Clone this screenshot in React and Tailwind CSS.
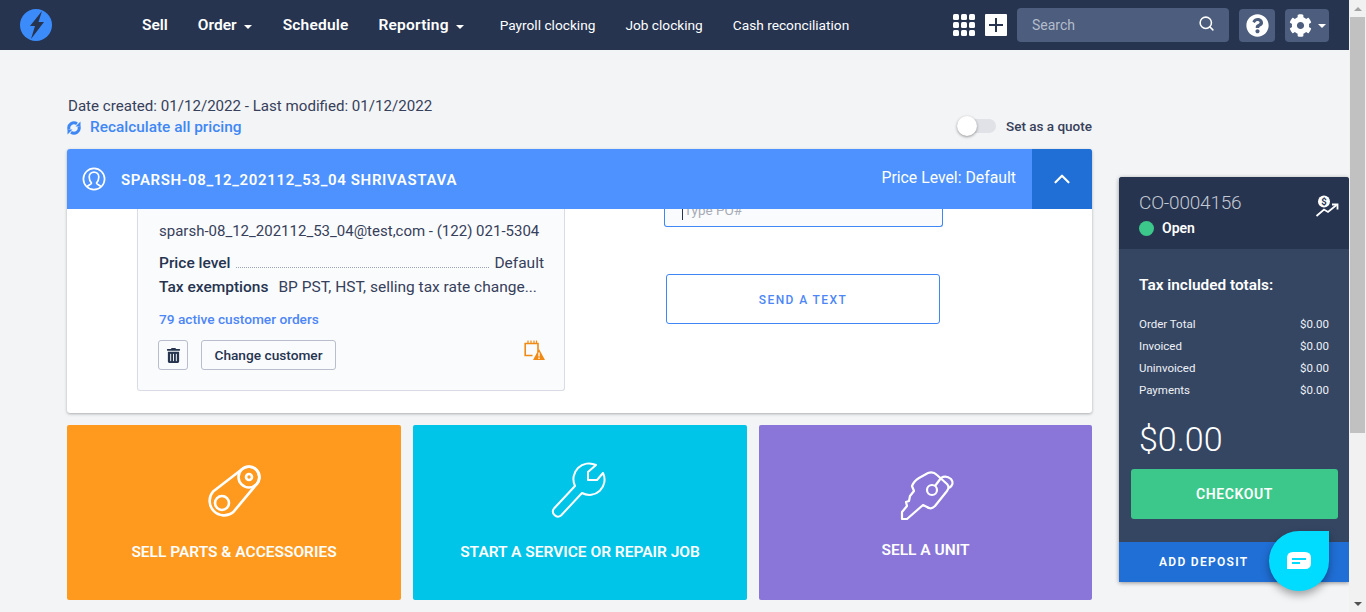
import React from "react";
import { ChevronUp, Search } from "lucide-react";
import { FaCog, FaQuestionCircle, FaTrashAlt } from "react-icons/fa";

function Caret() {
  return <span className="ml-[7px] mt-[2px] h-0 w-0 border-x-[4px] border-t-[4px] border-x-transparent border-t-white" />;
}

function Logo() {
  return (
    <svg width="32" height="32" viewBox="0 0 32 32">
      <circle cx="16" cy="16" r="16" fill="#3b8bfb" />
      <path d="M22 2 L10 17 L15 17 L11 30 L24 13 L18.5 13 L22 2 Z" fill="#263450" />
    </svg>
  );
}

function GridIcon() {
  const cells = [0, 8, 16];
  return (
    <svg width="22" height="22" viewBox="0 0 22 22" fill="white">
      {cells.map((y) => cells.map((x) => <rect key={`${x}-${y}`} x={x} y={y} width="6" height="6" rx="1.5" />))}
    </svg>
  );
}

function PlusIcon() {
  return (
    <svg width="22" height="22" viewBox="0 0 22 22">
      <rect width="22" height="22" rx="1" fill="white" />
      <path d="M11 4 V18 M4 11 H18" stroke="#263450" strokeWidth="2" />
    </svg>
  );
}

function SyncIcon() {
  return (
    <svg width="14" height="14" viewBox="0 0 14 14" fill="none" stroke="#3f87f5" strokeWidth="3">
      <path d="M2 8.5 A5.2 5.2 0 0 1 10 2.8" />
      <path d="M12 5.5 A5.2 5.2 0 0 1 4 11.2" />
      <path d="M8.5 5.5 H13.5 V0.5 Z" fill="#3f87f5" stroke="none" />
      <path d="M5.5 8.5 H0.5 V13.5 Z" fill="#3f87f5" stroke="none" />
    </svg>
  );
}

function UserCircle() {
  return (
    <svg width="24" height="24" viewBox="0 0 24 24" fill="none" stroke="white" strokeWidth="1.7">
      <circle cx="12" cy="12" r="10.6" />
      <path d="M5 20 C6 18 9.5 17.5 9.5 16 C8 14.5 7.2 12.5 7.2 10 C7.2 7 9.5 5.2 12 5.2 C14.5 5.2 16.8 7 16.8 10 C16.8 12.5 16 14.5 14.5 16 C14.5 17.5 18 18 19 20" />
    </svg>
  );
}

function CalendarWarning() {
  return (
    <svg width="21" height="21" viewBox="0 0 21 21" fill="none">
      <path d="M14 12 V3.5 H1.2 V15.5 H8.5" stroke="#f08a14" strokeWidth="1.6" />
      <path d="M4 0.5 V3.5 M7 0.5 V3.5 M10 0.5 V3.5 M12.5 0.5 V3.5" stroke="#f08a14" strokeWidth="1.2" />
      <path d="M15 9 L21 20 H9 Z" fill="#f08a14" />
      <path d="M15 12.5 V16.5 M15 17.6 V19" stroke="white" strokeWidth="1.3" />
    </svg>
  );
}

function MarginIcon() {
  return (
    <svg width="24" height="24" viewBox="0 0 24 24" fill="none">
      <circle cx="9" cy="7.5" r="6" fill="white" />
      <text x="9" y="11" textAnchor="middle" fontSize="9.5" fontWeight="700" fill="#263450" fontFamily="Roboto, sans-serif">$</text>
      <path d="M1.5 22 L9 15.5 L13 18 L21.5 11" stroke="white" strokeWidth="1.8" />
      <path d="M17 10.5 H22.5 V15.5" stroke="white" strokeWidth="1.8" />
    </svg>
  );
}

function BeltIcon() {
  return (
    <svg width="60" height="60" viewBox="204 460 60 60" fill="none" stroke="white" strokeWidth="2.6">
      <path d="M213.1 490.5 L242.6 467.7 A10.5 10.5 0 0 1 257 482.7 L233.1 511.3 A14.5 14.5 0 0 1 213.1 490.5 Z" />
      <circle cx="249" cy="476" r="10.5" />
      <circle cx="249" cy="476" r="3" />
      <circle cx="222" cy="502" r="7" />
    </svg>
  );
}

function WrenchIcon() {
  return (
    <svg width="100" height="80" viewBox="0 0 100 80" fill="none" stroke="white" strokeWidth="2" strokeLinejoin="round">
      <path d="M66 15 A15.7 15.7 0 0 0 45 36 L24 58.5 A5 5 0 0 0 31 65.5 L52 43 A15.2 15.2 0 0 0 73 23 L67 30 H58 V22 Z" />
    </svg>
  );
}

function KeyIcon() {
  return (
    <svg width="90" height="70" viewBox="0 0 90 70" fill="none" stroke="white" strokeWidth="2.2" strokeLinejoin="round">
      <path d="M21 52 L21 59 L26 59 L42 45 L46 47 Q50 50 54 46 L66 31 Q69 27 66 24 L56 15 Q52 11 47 13 L38 18 Q33 21 31 26 L33 31 L29 36 L28 41 L25 42 L26 46 Z" />
      <circle cx="51" cy="30" r="5" />
      <path d="M54 26 L60 18 Q65 15 70 19 Q74 24 68 28" />
    </svg>
  );
}

function ChatIcon() {
  return (
    <svg width="24" height="18" viewBox="0 0 24 18">
      <path d="M6 0 H18 Q24 0 24 6 V11 Q24 17 18 17 H0 V6 Q0 0 6 0 Z" fill="white" />
      <path d="M5 7 H19 M5 11 H13" stroke="#00dcff" strokeWidth="2" />
    </svg>
  );
}

function ActionCard({ color, label, topClass, labelClass, children }) {
  return (
    <div className={`flex h-[175px] w-[334px] shrink-0 flex-col items-center rounded-[2px] last:w-[333px] ${color} ${topClass}`}>
      {children}
      <div className={`text-[15.5px] font-semibold leading-5 text-white ${labelClass}`}>{label}</div>
    </div>
  );
}

function TotalRow({ label, value }) {
  return (
    <div className="flex h-[22px] items-center justify-between text-[11.5px] text-[#eef1f6]">
      <span>{label}</span>
      <span>{value}</span>
    </div>
  );
}

function Scrollbar() {
  return (
    <div className="flex w-[17px] shrink-0 flex-col items-center bg-[#f1f1f1]">
      <div className="flex h-[17px] items-center justify-center">
        <span className="h-0 w-0 border-x-[4px] border-b-[4px] border-x-transparent border-b-[#a3a3a3]" />
      </div>
      <div className="h-[416px] w-[15px] bg-[#c1c1c1]" />
      <div className="flex-1" />
      <div className="flex h-[17px] items-center justify-center">
        <span className="h-0 w-0 border-x-[4px] border-t-[4px] border-x-transparent border-t-[#505050]" />
      </div>
    </div>
  );
}

export default function App() {
  return (
    <div className="relative flex h-[612px] overflow-hidden bg-[#f3f4f6] font-['Roboto',sans-serif] text-[#263450]">
      <div className="flex min-w-0 flex-1 flex-col">
        <nav className="flex h-[50px] shrink-0 items-center bg-[#263450] pl-[20px] pr-[20px] text-white">
          <Logo />
          <div className="ml-[90px] flex items-center gap-[30px]">
            <a className="mt-[1px] text-[15.5px] font-semibold">Sell</a>
            <a className="mr-[1px] mt-[1px] flex items-center text-[15.5px] font-semibold">Order<Caret /></a>
            <a className="mt-[1px] text-[15.5px] font-semibold tracking-[0.2px]">Schedule</a>
            <a className="mr-[6px] mt-[1px] flex items-center text-[15.5px] font-semibold tracking-[0.2px]">Reporting<Caret /></a>
            <a className="text-[13.7px]">Payroll clocking</a>
            <a className="text-[13.7px]">Job clocking</a>
            <a className="text-[13.7px]">Cash reconciliation</a>
          </div>
          <div className="ml-auto flex items-center">
            <GridIcon />
            <span className="ml-[10px]"><PlusIcon /></span>
            <div className="ml-[10px] flex h-[34px] w-[212px] items-center justify-between rounded-[4px] bg-[#4c5d7d] pl-[15px] pr-[14px]">
              <span className="mt-[1px] text-[14px] text-[#b4bccb]">Search</span>
              <Search size={17} strokeWidth={2.2} className="mb-[3px] text-white" />
            </div>
            <div className="ml-[10px] flex h-[33px] w-[36px] items-center justify-center rounded-[4px] bg-[#4c5d7d]">
              <FaQuestionCircle size={23} />
            </div>
            <div className="ml-[10px] flex h-[33px] w-[44px] items-center rounded-[4px] bg-[#4c5d7d] pl-[4px]">
              <FaCog size={23} />
              <span className="ml-[6px] mt-[2px] h-0 w-0 border-x-[4px] border-t-[4px] border-x-transparent border-t-white" />
            </div>
          </div>
        </nav>

        <div className="flex min-h-0 flex-1 pl-[67px]">
          <main className="w-[1025px] shrink-0 pt-[46px]">
            <div className="flex items-end justify-between">
              <div>
                <div className="pl-px text-[15.1px] leading-[21px] text-[#36405a]">Date created: 01/12/2022 - Last modified: 01/12/2022</div>
                <div className="flex h-[22px] items-center text-[15.4px] font-medium text-[#3f87f5]">
                  <SyncIcon />
                  <span className="ml-[9px]">Recalculate all pricing</span>
                </div>
              </div>
              <div className="mb-[2px] flex h-[22px] items-center">
                <div className="relative h-[14px] w-[39px] rounded-full bg-[#e0e2e7]">
                  <span className="absolute left-0 top-[-3px] h-[20px] w-[20px] rounded-full bg-white shadow-[0_1px_3px_rgba(0,0,0,0.4)]" />
                </div>
                <span className="ml-[10px] text-[13.5px] font-medium text-[#36405a]">Set as a quote</span>
              </div>
            </div>

            <section className="mt-[10px] h-[264px] overflow-hidden rounded-[3px] bg-white shadow-[0_1px_3px_rgba(0,0,0,0.3)]">
              <header className="relative z-10 flex h-[60px] items-center bg-[#4d92ff] pl-[15px] text-white">
                <UserCircle />
                <span className="ml-[15px] mt-[2px] text-[15px] font-semibold tracking-[0.65px]">SPARSH-08_12_202112_53_04 SHRIVASTAVA</span>
                <span className="ml-auto mr-[16px] mt-[-3px] text-[15.8px]">Price Level: Default</span>
                <div className="flex h-[60px] w-[60px] items-center justify-center bg-[#206fd6]">
                  <ChevronUp size={26} strokeWidth={2} />
                </div>
              </header>
              <div className="flex pl-[70px]">
                <div className="h-[182px] w-[428px] rounded-b-[3px] border border-t-0 border-[#d9dce5] bg-[#fafbfd] pl-[21px] pr-[20px]">
                  <div className="mt-[11px] text-[15px] leading-[22px] text-[#36405a]">sparsh-08_12_202112_53_04@test,com - (122) 021-5304</div>
                  <div className="mt-[11px] flex h-[22px] items-center text-[15.5px]">
                    <span className="font-medium">Price level</span>
                    <span className="mx-[5px] mt-[6px] flex-1 border-b border-dotted border-[#9aa2b4]" />
                    <span className="text-[#36405a]">Default</span>
                  </div>
                  <div className="mt-[2px] flex h-[22px] items-center text-[15.5px]">
                    <span className="shrink-0 font-medium">Tax exemptions</span>
                    <span className="ml-[10px] truncate text-[#36405a]">BP PST, HST, selling tax rate change...</span>
                  </div>
                  <div className="mt-[10px] text-[13.7px] font-medium leading-5 text-[#4d86f7]">79 active customer orders</div>
                  <div className="ml-[-1px] mt-[11px] flex items-start">
                    <button className="flex h-[30px] w-[30px] items-center justify-center rounded-[3px] border border-[#b9bdcc]">
                      <FaTrashAlt size={15} />
                    </button>
                    <button className="ml-[13px] h-[30px] w-[135px] rounded-[3px] border border-[#b9bdcc] text-[13.7px] font-medium">Change customer</button>
                    <span className="ml-auto mr-[-1px]"><CalendarWarning /></span>
                  </div>
                </div>
                <div className="ml-[99px]">
                  <div className="h-[18px] w-[279px] overflow-hidden rounded-b-[3px] border border-t-0 border-[#3f87f5] bg-[#fafbfd] pl-[17px]">
                    <div className="mt-[-9px] border-l border-[#263450] pl-px text-[13.5px] leading-[20px] text-[#a7abb5]">Type PO#</div>
                  </div>
                  <button className="ml-[2px] mt-[47px] h-[50px] w-[274px] rounded-[3px] border border-[#3f87f5] pt-[2px] text-[12px] font-medium tracking-[1.4px] text-[#4d86f7]">SEND A TEXT</button>
                </div>
              </div>
            </section>

            <div className="mt-[12px] flex gap-[12px]">
              <ActionCard color="bg-[#ff9a1f]" label="SELL PARTS & ACCESSORIES" topClass="pt-[36px]" labelClass="mt-[21px]">
                <BeltIcon />
              </ActionCard>
              <ActionCard color="bg-[#00c5e8]" label="START A SERVICE OR REPAIR JOB" topClass="pt-[25px]" labelClass="mt-[12px]">
                <WrenchIcon />
              </ActionCard>
              <ActionCard color="bg-[#8976d8]" label="SELL A UNIT" topClass="pt-[35px]" labelClass="mt-[10px]">
                <KeyIcon />
              </ActionCard>
            </div>
          </main>

          <aside className="ml-[27px] mt-[127px] h-[405px] w-[230px] shrink-0 overflow-hidden rounded-t-[3px] bg-[#354663] shadow-[0_1px_4px_rgba(0,0,0,0.4)]">
            <div className="relative h-[72px] bg-[#263450] pl-[20px] pt-[14px]">
              <div className="text-[19px] font-light leading-6 tracking-[-0.2px] text-[#c3c9d4]">CO-0004156</div>
              <div className="mt-[3px] flex items-center">
                <span className="h-[15px] w-[15px] rounded-full bg-[#3bc88a]" />
                <span className="ml-[8px] text-[14px] font-semibold text-white">Open</span>
              </div>
              <span className="absolute right-[10px] top-[17px]"><MarginIcon /></span>
            </div>
            <div className="px-[20px] pt-[25px]">
              <div className="text-[15.4px] font-semibold leading-[22px] text-white">Tax included totals:</div>
              <div className="mt-[18px]">
                <TotalRow label="Order Total" value="$0.00" />
                <TotalRow label="Invoiced" value="$0.00" />
                <TotalRow label="Uninvoiced" value="$0.00" />
                <TotalRow label="Payments" value="$0.00" />
              </div>
              <div className="mt-[17px] text-[34px] font-light leading-[40px] text-white">$0.00</div>
            </div>
            <div className="ml-[12px] mr-[11px] mt-[10px] flex h-[50px] items-center justify-center rounded-[3px] bg-[#3bc88a] text-[14px] font-semibold tracking-[0.6px] text-white">CHECKOUT</div>
            <div className="mt-[23px] flex h-[40px] items-center bg-[#206fd6] pl-[40px] text-[12px] font-semibold tracking-[1.3px] text-white">ADD DEPOSIT</div>
          </aside>
        </div>
      </div>
      <Scrollbar />
      <button className="absolute left-[1269px] top-[531px] flex h-[60px] w-[60px] items-center justify-center rounded-l-full rounded-br-full rounded-tr-[6px] bg-[#00dcff] shadow-[0_4px_8px_rgba(0,0,0,0.35)]">
        <ChatIcon />
      </button>
    </div>
  );
}
